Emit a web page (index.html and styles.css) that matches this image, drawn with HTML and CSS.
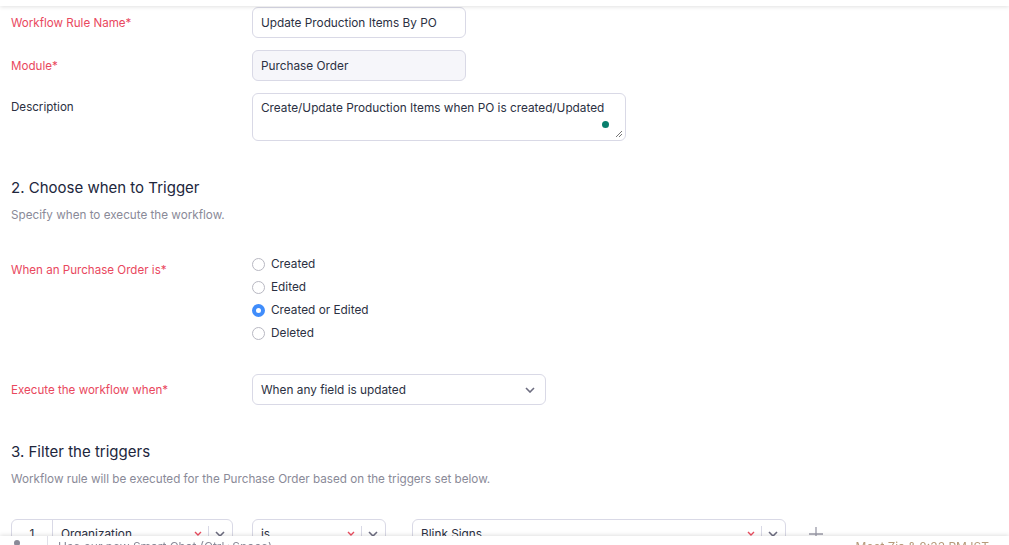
FILE: index.html
```html
<!DOCTYPE html>
<html>
<head>
<meta charset="utf-8">
<link rel="stylesheet" href="styles.css">
</head>
<body>
<div class="topbar"></div>
<main class="content">
  <div class="row">
    <label class="label req">Workflow Rule Name*</label>
    <div class="input">Update Production Items By PO</div>
  </div>
  <div class="row">
    <label class="label req">Module*</label>
    <div class="input disabled">Purchase Order</div>
  </div>
  <div class="row">
    <label class="label top">Description</label>
    <div class="textarea">Create/Update Production Items when PO is created/Updated
      <span class="gdot"></span>
      <svg class="grip" width="8" height="8" viewBox="0 0 8 8"><path d="M7 1L1 7M7 4L4 7" stroke="#777" stroke-width="1"/></svg>
    </div>
  </div>

  <section class="section s2">
    <h2 class="heading">2. Choose when to Trigger</h2>
    <p class="sub">Specify when to execute the workflow.</p>
  </section>

  <div class="row radios-row">
    <label class="label req rlabel">When an Purchase Order is*</label>
    <div class="radios">
      <div class="radio"><span class="dot"></span>Created</div>
      <div class="radio"><span class="dot"></span>Edited</div>
      <div class="radio"><span class="dot on"></span>Created or Edited</div>
      <div class="radio"><span class="dot"></span>Deleted</div>
    </div>
  </div>

  <div class="row exec-row">
    <label class="label req">Execute the workflow when*</label>
    <div class="select">
      <span>When any field is updated</span>
      <svg class="chev" width="10" height="6" viewBox="0 0 10 6"><path d="M1 1l4 4 4-4" fill="none" stroke="#6d6d80" stroke-width="1.6"/></svg>
    </div>
  </div>

  <section class="section s3">
    <h2 class="heading">3. Filter the triggers</h2>
    <p class="sub">Workflow rule will be executed for the Purchase Order based on the triggers set below.</p>
  </section>

  <div class="filter">
    <div class="combo c1">
      <span class="num">1</span>
      <span class="ctext">Organization</span>
      <svg class="x" width="8" height="6" viewBox="0 0 8 6"><path d="M1 1l3 3 3-3" fill="none" stroke="#ea4d5f" stroke-width="1.4"/></svg>
      <span class="div"></span>
      <svg class="chev" width="10" height="6" viewBox="0 0 10 6"><path d="M1 1l4 4 4-4" fill="none" stroke="#6d6d80" stroke-width="1.6"/></svg>
    </div>
    <div class="combo c2">
      <span class="ctext">is</span>
      <svg class="x" width="8" height="6" viewBox="0 0 8 6"><path d="M1 1l3 3 3-3" fill="none" stroke="#ea4d5f" stroke-width="1.4"/></svg>
      <span class="div"></span>
      <svg class="chev" width="10" height="6" viewBox="0 0 10 6"><path d="M1 1l4 4 4-4" fill="none" stroke="#6d6d80" stroke-width="1.6"/></svg>
    </div>
    <div class="combo c3">
      <span class="ctext">Blink Signs</span>
      <svg class="x" width="8" height="6" viewBox="0 0 8 6"><path d="M1 1l3 3 3-3" fill="none" stroke="#ea4d5f" stroke-width="1.4"/></svg>
      <span class="div"></span>
      <svg class="chev" width="10" height="6" viewBox="0 0 10 6"><path d="M1 1l4 4 4-4" fill="none" stroke="#6d6d80" stroke-width="1.6"/></svg>
    </div>
    <svg class="plus" width="14" height="14" viewBox="0 0 14 14"><path d="M7 0v14M0 7h14" stroke="#9a9aa8" stroke-width="1.3"/></svg>
  </div>
</main>
<footer class="bottombar">
  <div class="fb-left"><span class="person"></span></div>
  <div class="fb-text">Use our new Smart Chat (Ctrl+Space)</div>
  <div class="fb-right">Meet Zia &amp; 8:33 PM IST</div>
</footer>
</body>
</html>
```

FILE: styles.css
```css
* { box-sizing: border-box; }
html, body { margin: 0; padding: 0; }
body {
  font-family: Inter, "Noto Sans", "Liberation Sans", sans-serif;
  font-size: 11.8px;
  color: #2b3042;
  background: #fff;
  width: 1009px;
  height: 545px;
  overflow: hidden;
}
.topbar {
  height: 6px;
  background: #fff;
  box-shadow: 0 1px 4px rgba(0,0,0,0.12);
  position: relative;
  z-index: 2;
}
.content {
  padding: 1px 0 0 11px;
}
.row {
  display: grid;
  grid-template-columns: 241px auto;
  align-items: center;
  margin-bottom: 12px;
}
.label {
  font-size: 11.6px;
  color: #2b3042;
}
.label.req { color: #e9485e; }
.label.top { align-self: start; padding-top: 7px; }
.input {
  width: 214px;
  height: 31px;
  border: 1px solid #d9d9e6;
  border-radius: 6px;
  padding: 0 8px;
  display: flex;
  align-items: center;
  background: #fff;
}
.input.disabled { background: #f6f6fa; }
.textarea {
  position: relative;
  width: 374px;
  height: 48px;
  border: 1px solid #d9d9e6;
  border-radius: 6px;
  padding: 7px 8px;
  line-height: 14px;
}
.gdot {
  position: absolute;
  right: 16px;
  top: 27px;
  width: 7px;
  height: 7px;
  border-radius: 50%;
  background: #087f6d;
}
.grip {
  position: absolute;
  right: 2px;
  bottom: 2px;
}
.section { margin: 0; }
.s2 { padding-top: 25px; }
.s3 { padding-top: 37px; }
.heading {
  margin: 0;
  font-size: 15px;
  font-weight: 400;
  line-height: 20px;
  color: #21263c;
}
.sub {
  margin: 9px 0 0;
  font-size: 11.7px;
  line-height: 16px;
  color: #8a8a98;
}
.radios-row {
  align-items: start;
  margin-top: 33px;
  margin-bottom: 0;
}
.rlabel { padding-top: 7px; }
.radios { display: flex; flex-direction: column; gap: 7px; }
.radio {
  display: flex;
  align-items: center;
  height: 16px;
  gap: 6px;
}
.dot {
  width: 13px;
  height: 13px;
  border-radius: 50%;
  border: 1px solid #b8b8c2;
  background: #fff;
}
.dot.on { border: 4px solid #408dfb; }
.exec-row { margin-top: 33px; margin-bottom: 0; }
.select {
  width: 294px;
  height: 31px;
  border: 1px solid #d9d9e6;
  border-radius: 6px;
  padding: 0 8px;
  display: flex;
  align-items: center;
  justify-content: space-between;
}
.select .chev { margin-right: 2px; }
.filter {
  margin-top: 32px;
  display: flex;
  align-items: center;
}
.combo {
  height: 30px;
  border: 1px solid #d9d9e6;
  border-radius: 6px;
  display: flex;
  align-items: center;
  flex: none;
}
.c1 { width: 222px; }
.c2 { width: 134px; margin-left: 19px; padding-left: 8px; }
.c3 { width: 374px; margin-left: 26px; padding-left: 8px; }
.num {
  width: 41px;
  height: 100%;
  border-right: 1px solid #d9d9e6;
  display: flex;
  align-items: center;
  justify-content: center;
}
.c1 .ctext { padding-left: 8px; }
.ctext { flex: 1; }
.x { margin-right: 6px; }
.div { width: 1px; height: 16px; background: #d9d9e6; margin-right: 6px; }
.combo .chev { margin-right: 7px; }
.plus { margin-left: 23px; }
.bottombar {
  position: fixed;
  left: 0;
  right: 0;
  bottom: 0;
  height: 9px;
  background: #fff;
  box-shadow: 0 -1px 4px rgba(0,0,0,0.12);
  display: flex;
  align-items: flex-start;
  overflow: hidden;
  z-index: 3;
  font-size: 12px;
  color: #8a8a98;
}
.fb-left {
  width: 48px;
  height: 9px;
  border-right: 1px solid #e0e0e8;
  display: flex;
  justify-content: center;
}
.person {
  display: block;
  width: 6px;
  height: 6px;
  margin: 4px 0 0 -14px;
  border-radius: 50%;
  background: #8a8a98;
}
.fb-text { padding: 3px 0 0 10px; }
.fb-right { margin-left: auto; padding: 3px 20px 0 0; color: #b59a7a; }
```
